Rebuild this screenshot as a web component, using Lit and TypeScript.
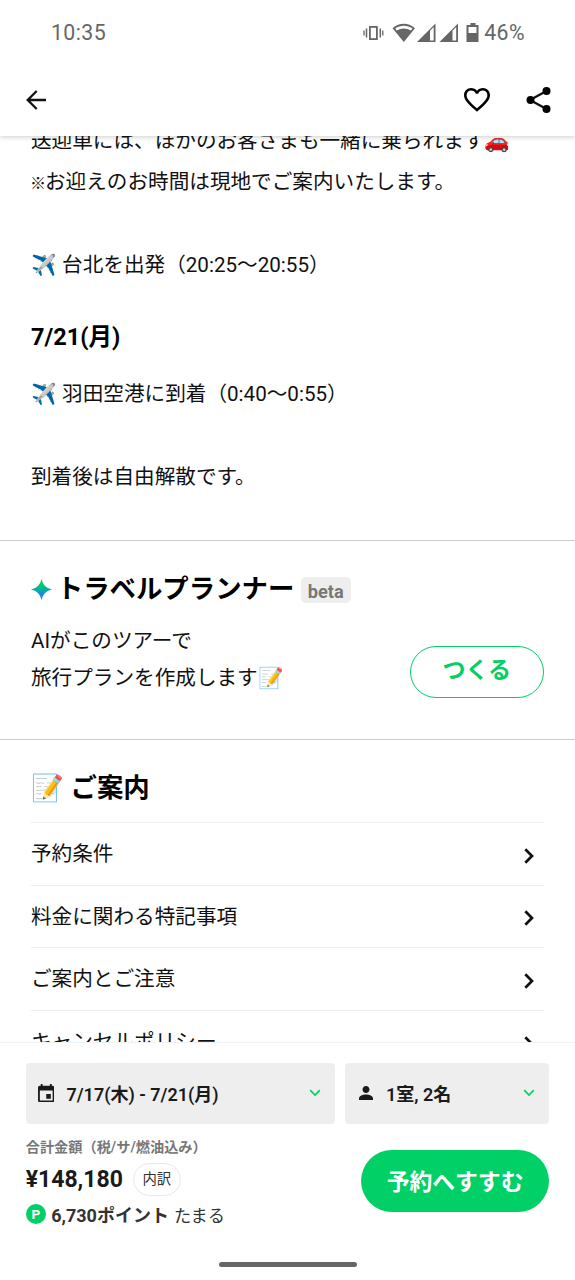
import { LitElement, html, svg, css } from "lit";
import { customElement } from "lit/decorators.js";

const chevronRight = html`<svg class="chev" viewBox="0 0 12 18" width="12" height="18"><path d="M2.3 2.3 9 9l-6.700 6.700" fill="none" stroke="#111" stroke-width="2.700"/></svg>`;
const chevronDown = html`<svg viewBox="0 0 12 8" width="12" height="8"><path d="M1.2 1.2 6 6l4.8-4.8" fill="none" stroke="#00d066" stroke-width="1.7"/></svg>`;
const signal = (x: number) => svg`<path d="M${x} 20 ${x + 18.5} 1.500V20Z" fill="#666"/><path d="M${x + 13} 8.800 ${x + 16.7} 5.100V18.500h-3.700Z" fill="#fff"/>`;

const noticeItems = ["予約条件", "料金に関わる特記事項", "ご案内とご注意", "キャンセルポリシー"];

@customElement("app-root")
export class AppRoot extends LitElement {
  static styles = css`
    :host {
      display: flex;
      flex-direction: column;
      width: 575px;
      height: 1280px;
      overflow: hidden;
      background: #fff;
      color: #111;
      font-family: Roboto, "Noto Sans CJK JP", sans-serif;
      font-size: 20.62px;
    }
    * { box-sizing: border-box; }
    svg { display: block; flex: none; }
    .status {
      height: 65px;
      flex: none;
      display: flex;
      justify-content: space-between;
      padding: 0 50px 0 51px;
      align-items: center;
      color: #666;
      font-size: 21.3px;
      letter-spacing: 0.4px;
      background: #fff;
      z-index: 2;
    }
    .status-right { display: flex; align-items: center; gap: 5.5px; }
    .bar {
      height: 71px;
      flex: none;
      display: flex;
      align-items: center;
      padding: 0 24px 1px 26px;
      box-shadow: 0 1px 5px rgba(0, 0, 0, 0.2);
      z-index: 1;
      background: #fff;
    }
    .bar .back { margin-right: auto; }
    .bar .heart { margin-right: 36px; }
    .content { flex: 1; min-height: 0; overflow: hidden; }
    .schedule { display: flow-root; height: 405px; padding: 0 31px; border-bottom: 1.5px solid #ccc; }
    .lines { margin-top: -15px; }
    .line { height: 41.3px; line-height: 41.3px; white-space: pre; }
    .kome { display: inline-block; width: 14px; font-size: 16px; letter-spacing: -2px; text-indent: -1px; line-height: 20px; font-weight: 700; }
    h2 { margin: 20px 0 6px; font-size: 23.5px; line-height: 62px; font-weight: 700; color: #000; }
    .planner { height: 199px; border-bottom: 1.5px solid #ccc; padding: 27px 31px 0; }
    .planner-title { display: flex; align-items: center; height: 42px; }
    .planner-title h3 { margin: 0 0 0 4.8px; font-size: 26.4px; line-height: 42px; color: #000; }
    .beta { background: #eee; color: #777; font-size: 18.2px; font-weight: 700; line-height: 30px; height: 26px; padding: 0 7px; border-radius: 5px; margin: 1px 0 0 6.500px; }
    .planner-body { display: flex; justify-content: space-between; margin-top: 13.3px; line-height: 37px; }
    .make { width: 134.5px; height: 52px; margin-top: 22.5px; border: 1.4px solid #00d066; border-radius: 26px; color: #00d066; font-weight: 700; font-size: 23px; line-height: 48px; text-align: center; }
    .notice { padding: 0 31px; }
    .notice h3 { margin: 0; height: 82px; font-size: 26.4px; line-height: 96px; color: #000; white-space: pre; }
    .item { display: flex; justify-content: space-between; height: 62.7px; border-top: 1.3px solid #eee; line-height: 62.5px; }
    .item .chev { margin: 23.5px 9px 0 0; }
    .footer { height: 238px; flex: none; border-top: 1px solid #f2f2f2; padding: 20px 25.7px 0; color: #1a1a1a; }
    .fields { display: grid; grid-template-columns: 309px 204.4px; gap: 10px; }
    .field { display: flex; align-items: center; height: 60.5px; border-radius: 4px; background: #eee; padding: 0 14px 0 12px; font-size: 18px; font-weight: 600; }
    .field .label { margin: 0 auto 0 11.3px; }
    .field .cal { margin: 0 1px 1px 0; }
    .summary { display: flex; justify-content: space-between; }
    .total { font-size: 14.2px; font-weight: 600; color: #777; line-height: 20px; margin-top: 13.5px; }
    .price-row { display: flex; align-items: center; height: 34px; margin-top: 5px; }
    .price { font-size: 23px; font-weight: 700; }
    .detail { margin-left: 10px; height: 33px; width: 48px; border-radius: 17px; border: 1.5px solid #e8e8e8; font-size: 14.4px; color: #333; line-height: 32px; text-align: center; }
    .points { display: flex; align-items: center; height: 36px; font-size: 18px; color: #333; }
    .points strong { margin: 0 5px 0 5px; }
    .points .earn { font-size: 17.2px; }
    .points-badge { width: 20.5px; height: 20.5px; border-radius: 50%; background: #00d066; color: #fff; font-size: 13.5px; font-weight: 700; line-height: 21px; text-align: center; }
    .cta { width: 188.5px; height: 62px; margin-top: 26.5px; border-radius: 31px; background: #00d066; color: #fff; font-size: 22.8px; font-weight: 700; line-height: 65px; text-align: center; }
    .home { width: 138px; height: 5px; border-radius: 3px; background: #666; margin: 30px auto 0; }
  `;

  render() {
    return html`
      <div class="status">
        <span>10:35</span>
        <div class="status-right">
          <svg width="116" height="22" viewBox="0 0 116 22">
            <g stroke="#666" fill="none"><rect x="6.9" y="4.9" width="7" height="12.2" stroke-width="1.8"/><path d="M3.5 6.5v9M17.3 6.5v9" stroke-width="1.5"/><path d="M1 8.5v5M19.8 8.5v5" stroke-width="1.3"/></g>
            <path d="M29.500 6.2C36.500 .4 45 .4 52 6.200L40.800 20Z" fill="#666"/>
            <path d="M32.200 6.600C37.500 2.900 44 2.900 49.500 6.600L47.900 8.600C43.500 5.800 38 5.800 33.800 8.600Z" fill="#fff"/>
            ${signal(54)}${signal(76.5)}
            <path d="M107.500 1h5v2h3v17h-12V3h4Z" fill="#666"/><path d="M105.500 5h8v6h-8Z" fill="#fff"/>
          </svg>
          <span>46%</span>
        </div>
      </div>
      <div class="bar">
        <svg class="back" width="21" height="20" viewBox="0 0 21 20"><path d="M20 10H2M10.700 1 1.700 10l9 9" fill="none" stroke="#111" stroke-width="2.300"/></svg>
        <svg class="heart" width="26" height="24" viewBox="2 3 20 18.500"><path d="M16.500 3c-1.740 0-3.410.81-4.500 2.090C10.910 3.810 9.240 3 7.500 3 4.420 3 2 5.420 2 8.500c0 3.780 3.400 6.860 8.550 11.540L12 21.350l1.450-1.320C18.600 15.360 22 12.280 22 8.500 22 5.420 19.580 3 16.500 3zm-4.400 15.550l-.1.100-.1-.1C7.140 14.240 4 11.390 4 8.500 4 6.500 5.500 5 7.500 5c1.540 0 3.040.99 3.570 2.360h1.870C13.460 5.990 14.960 5 16.500 5c2 0 3.500 1.500 3.500 3.500 0 2.890-3.140 5.740-7.900 10.050z"/></svg>
        <svg width="25" height="26" viewBox="0 0 25 26"><path d="M20.500 4 4 13l16.500 9" fill="none" stroke="#111" stroke-width="2.300"/><circle cx="20.500" cy="4" r="4"/><circle cx="4.500" cy="13" r="4"/><circle cx="20.500" cy="22" r="4"/></svg>
      </div>
      <div class="content">
        <section class="schedule">
          <div class="lines">
            <div class="line">送迎車には、ほかのお客さまも一緒に乗られます🚗</div>
            <div class="line"><span class="kome">※</span>お迎えのお時間は現地でご案内いたします。</div>
            <div class="line"></div>
            <div class="line">✈️ 台北を出発（20:25〜20:55）</div>
          </div>
          <h2>7/21(月)</h2>
          <div class="line">✈️ 羽田空港に到着（0:40〜0:55）</div>
          <div class="line"></div>
          <div class="line">到着後は自由解散です。</div>
        </section>
        <section class="planner">
          <div class="planner-title">
            <svg width="21" height="21" viewBox="0 0 21 21"><defs><linearGradient id="spark" x2="0" y2="1"><stop offset=".2" stop-color="#00d35f"/><stop offset=".5" stop-color="#00b39b"/><stop offset=".8" stop-color="#2979ff"/></linearGradient></defs><path d="M10.500 0Q12.300 8.700 21 10.500 12.300 12.300 10.500 21 8.700 12.300 0 10.500 8.700 8.700 10.500 0Z" fill="url(#spark)"/></svg>
            <h3>トラベルプランナー</h3><span class="beta">beta</span>
          </div>
          <div class="planner-body">
            <div>AIがこのツアーで<br>旅行プランを作成します📝</div>
            <div class="make">つくる</div>
          </div>
        </section>
        <section class="notice">
          <h3>📝 ご案内</h3>
          ${noticeItems.map((t) => html`<div class="item"><span>${t}</span>${chevronRight}</div>`)}
        </section>
      </div>
      <div class="footer">
        <div class="fields">
          <div class="field">
            <svg class="cal" width="16.500" height="18.300" viewBox="3 1 18 20"><path fill="#1a1a1a" d="M17 12h-5v5h5v-5zM16 1v2H8V1H6v2H5c-1.110 0-1.990.900-1.990 2L3 19c0 1.100.890 2 2 2h14c1.100 0 2-.9 2-2V5c0-1.100-.9-2-2-2h-1V1h-2zm3 18H5V8h14v11z"/></svg>
            <span class="label">7/17(木) - 7/21(月)</span>${chevronDown}
          </div>
          <div class="field">
            <svg width="18" height="18" viewBox="3 3 18 18"><path fill="#1a1a1a" d="M12 12c1.930 0 3.500-1.570 3.500-3.500S13.930 5 12 5 8.500 6.570 8.500 8.500 10.070 12 12 12zm0 1.500c-3 0-7 1.300-7 4V19h14v-1.500c0-2.700-4-4-7-4z"/></svg>
            <span class="label">1室, 2名</span>${chevronDown}
          </div>
        </div>
        <div class="summary">
          <div>
            <div class="total">合計金額（税/サ/燃油込み）</div>
            <div class="price-row"><span class="price">¥148,180</span><span class="detail">内訳</span></div>
            <div class="points"><span class="points-badge">P</span><strong>6,730ポイント</strong><span class="earn">たまる</span></div>
          </div>
          <div class="cta">予約へすすむ</div>
        </div>
        <div class="home"></div>
      </div>
    `;
  }
}
